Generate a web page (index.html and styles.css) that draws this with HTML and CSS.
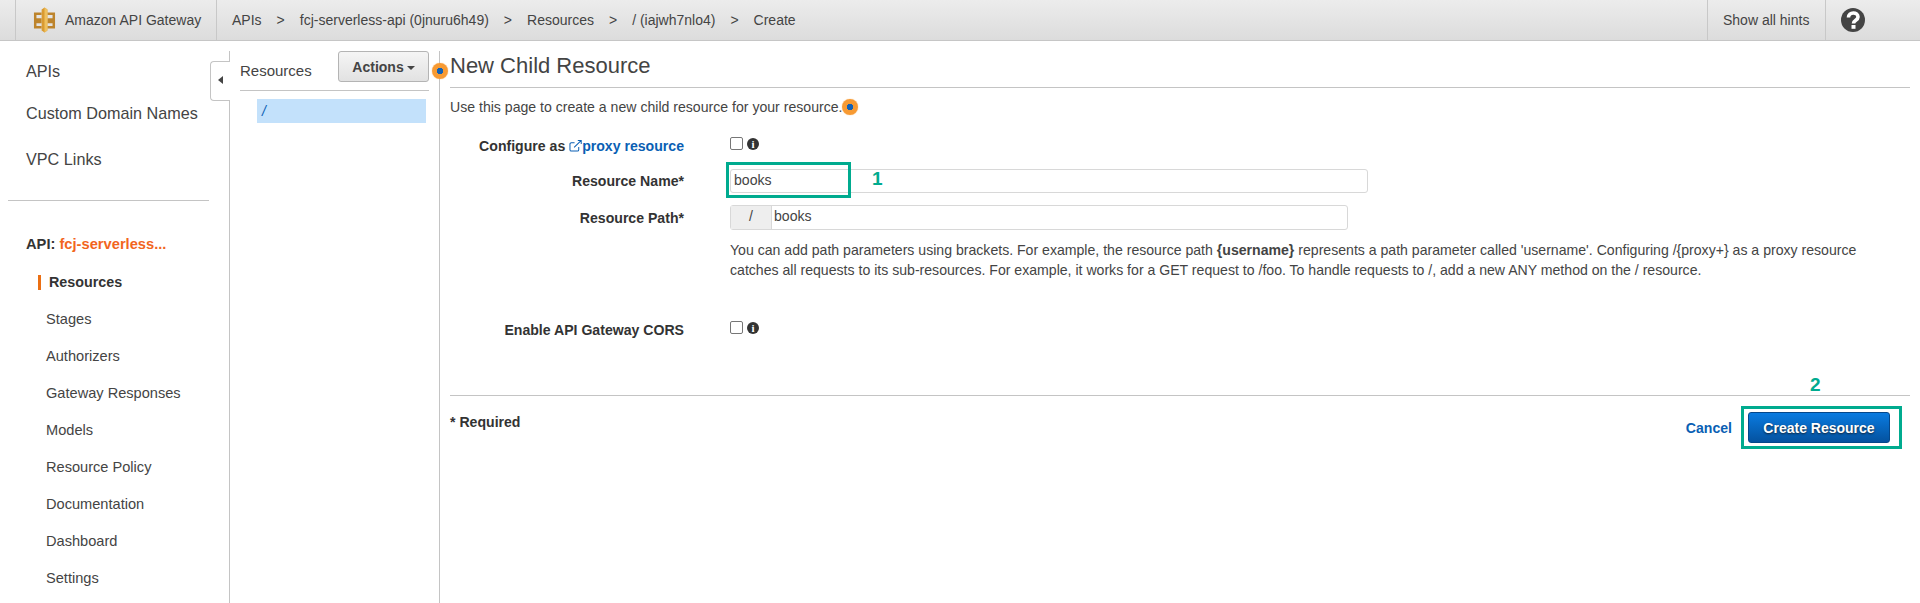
FILE: index.html
```html
<!DOCTYPE html>
<html lang="en">
<head>
    <meta charset="UTF-8">
    <title>Amazon API Gateway</title>
    <link rel="stylesheet" href="styles.css">
</head>
<body>
    <header class="topbar">
        <div class="brand">
            <svg class="brand-logo" viewBox="0 0 24 26" width="23" height="26">
                <path fill="none" stroke="#bd842c" stroke-width="2.600" d="M9 6.500H2.300v6H9M9 15H2.300v5.500H9M15 6.500h6.700v6H15M15 15h6.700v5.500H15"/>
                <path fill="#d99a32" d="M9 2l3-2 3 2v22l-3 2-3-2z"/>
                <path fill="#efc05e" d="M12 0l3 2v22l-3 2z"/>
            </svg>
            <span>Amazon API Gateway</span>
        </div>
        <nav class="crumbs">
            <span>APIs</span><i>&gt;</i>
            <span>fcj-serverless-api (0jnuru6h49)</span><i>&gt;</i>
            <span>Resources</span><i>&gt;</i>
            <span>/ (iajwh7nlo4)</span><i>&gt;</i>
            <span>Create</span>
        </nav>
        <div class="hints">Show all hints</div>
        <div class="help">
            <svg viewBox="0 0 24 24" width="24" height="24">
                <circle cx="12" cy="12" r="12" fill="#444"/>
                <path fill="none" stroke="#fff" stroke-width="3.600" d="M7.500 9.500c0-6 9.500-6 9.500-.5 0 3.500-4.500 3-4.500 6.500"/>
                <rect x="10.500" y="17" width="4" height="3.800" fill="#fff"/>
            </svg>
        </div>
    </header>

    <div class="page">
        <aside class="sidebar">
            <ul class="nav-top">
                <li>APIs</li>
                <li>Custom Domain Names</li>
                <li>VPC Links</li>
            </ul>
            <div class="api-name">API: <span>fcj-serverless...</span></div>
            <ul class="nav-sub">
                <li class="active">Resources</li>
                <li>Stages</li>
                <li>Authorizers</li>
                <li>Gateway Responses</li>
                <li>Models</li>
                <li>Resource Policy</li>
                <li>Documentation</li>
                <li>Dashboard</li>
                <li>Settings</li>
            </ul>
            <div class="collapse"><span></span></div>
        </aside>

        <section class="tree">
            <div class="tree-head">
                <span>Resources</span>
                <button class="actions">Actions<b></b></button>
            </div>
            <div class="tree-item">/</div>
            <div class="hint-dot tree-dot"></div>
        </section>

        <main class="content">
            <h1>New Child Resource</h1>
            <p class="intro">Use this page to create a new child resource for your resource.<span class="hint-dot"></span></p>

            <div class="row row-proxy">
                <label>Configure as
                    <a class="ext-link"><svg viewBox="0 0 14 13" width="13" height="12"><path fill="none" stroke="#0a5fb4" stroke-width="1.100" d="M10.500 7.500v3a1.500 1.500 0 0 1-1.500 1.500H2.500A1.500 1.500 0 0 1 1 10.500V4.500A1.500 1.500 0 0 1 2.500 3H6M5.500 8L13 .8M9.500.6H13.200V4.300"/></svg>proxy resource</a>
                </label>
                <div class="check-cell"><span class="checkbox"></span><span class="info">i</span></div>
            </div>
            <div class="row row-name">
                <label>Resource Name*</label>
                <div class="text-field name-field">books</div>
            </div>
            <div class="row row-path">
                <label>Resource Path*</label>
                <div class="path-field"><span class="path-prefix">/</span><span class="path-value">books</span></div>
            </div>
            <p class="help-text">You can add path parameters using brackets. For example, the resource path <b>{username}</b> represents a path parameter called 'username'. Configuring /{proxy+} as a proxy resource catches all requests to its sub-resources. For example, it works for a GET request to /foo. To handle requests to /, add a new ANY method on the / resource.</p>
            <div class="row row-cors">
                <label>Enable API Gateway CORS</label>
                <div class="check-cell"><span class="checkbox"></span><span class="info">i</span></div>
            </div>

            <div class="form-foot">
                <span class="required">* Required</span>
                <a class="cancel">Cancel</a>
                <button class="create">Create Resource</button>
            </div>

            <!-- tutorial annotations drawn on top of the form -->
            <div class="mark mark-name"></div>
            <div class="mark-num num-1">1</div>
            <div class="mark mark-create"></div>
            <div class="mark-num num-2">2</div>
        </main>
    </div>
</body>
</html>
```

FILE: styles.css
```css
* {
    box-sizing: border-box;
}
html, body {
    margin: 0;
    padding: 0;
    height: 603px;
    overflow: hidden;
}
body {
    font-family: "Liberation Sans", Arial, sans-serif;
    font-size: 14px;
    color: #444;
    background-color: #fff;
}
ul {
    list-style: none;
    margin: 0;
    padding: 0;
}

/* top bar */
.topbar {
    display: flex;
    align-items: stretch;
    height: 41px;
    background: linear-gradient(#ececec, #dcdcdc);
    border-bottom: 1px solid #c6c6c6;
}
.brand {
    display: flex;
    align-items: center;
    gap: 9px;
    width: 202px;
    margin-left: 15px;
    padding-left: 17px;
    border-left: 1px solid #c8c8c8;
    border-right: 1px solid #c8c8c8;
}
.crumbs {
    flex: 1;
    display: flex;
    align-items: center;
    padding-left: 15px;
}
.crumbs i {
    font-style: normal;
    margin: 0 15px;
}
.hints {
    display: flex;
    align-items: center;
    width: 119px;
    padding-left: 15px;
    border-left: 1px solid #c8c8c8;
    border-right: 1px solid #c8c8c8;
}
.help {
    display: flex;
    align-items: center;
    width: 94px;
    padding-left: 15px;
}

/* columns */
.page {
    display: flex;
    height: 562px;
    padding-top: 10px;
}
.sidebar {
    position: relative;
    width: 230px;
    flex-shrink: 0;
    border-right: 1px solid #c4c4c4;
    padding-left: 8px;
}
.nav-top {
    width: 201px;
    padding: 0 0 15px 18px;
    border-bottom: 1px solid #c4c4c4;
    font-size: 16.200px;
}
.nav-top li {
    height: 46px;
    line-height: 20px;
    padding-top: 10px;
}
.nav-top li:first-child {
    height: 42px;
}
.api-name {
    margin: 34px 0 0 18px;
    font-size: 14.700px;
    font-weight: bold;
    line-height: 18px;
    color: #333;
}
.api-name span {
    color: #f2651d;
}
.nav-sub {
    margin: 11px 0 0 38px;
    font-size: 14.600px;
}
.nav-sub li {
    height: 37px;
    line-height: 37px;
}
.nav-sub .active {
    position: relative;
    margin-left: 3px;
    font-weight: bold;
    font-size: 14.300px;
    color: #333;
}
.nav-sub .active::before {
    content: "";
    position: absolute;
    left: -11px;
    top: 11px;
    width: 3px;
    height: 15px;
    background-color: #eb6f13;
}
.collapse {
    position: absolute;
    top: 10px;
    right: -1px;
    width: 20px;
    height: 40px;
    background-color: #fff;
    border: 1px solid #c4c4c4;
    border-right: none;
    border-radius: 4px 0 0 4px;
}
.collapse span {
    position: absolute;
    left: 7px;
    top: 14px;
    border: 4px solid transparent;
    border-left-width: 0;
    border-right: 5px solid #444;
}

.tree {
    position: relative;
    width: 210px;
    flex-shrink: 0;
    border-right: 1px solid #c4c4c4;
}
.tree-head {
    display: flex;
    justify-content: space-between;
    align-items: flex-start;
    width: 189px;
    height: 40px;
    margin-left: 10px;
    border-bottom: 1px solid #c4c4c4;
    font-size: 15px;
}
.tree-head span {
    margin-top: 10px;
    line-height: 20px;
}
.actions {
    width: 91px;
    height: 31px;
    padding: 0;
    font-family: inherit;
    font-size: 14px;
    font-weight: bold;
    color: #444;
    background: linear-gradient(#f5f5f5, #e2e2e2);
    border: 1px solid #b4b4b4;
    border-radius: 3px;
}
.actions b {
    display: inline-block;
    margin-left: 3px;
    vertical-align: middle;
    border: 4px solid transparent;
    border-bottom: none;
    border-top: 4px solid #444;
}
.tree-item {
    width: 169px;
    height: 24px;
    margin: 8px 0 0 27px;
    padding-left: 5px;
    line-height: 24px;
    font-size: 14px;
    font-style: italic;
    color: #0a5fb4;
    background-color: #c3e1fb;
}
.hint-dot {
    display: inline-block;
    flex-shrink: 0;
    width: 16px;
    height: 16px;
    background: radial-gradient(circle, #1261b5 0 3px, #f79a33 3.500px);
    border-radius: 50%;
    box-shadow: 0 0 1px #f79a33;
}
.tree-dot {
    position: absolute;
    right: -9px;
    top: 12px;
}

/* form */
.content {
    position: relative;
    flex: 1;
    padding: 0 10px;
    font-size: 14.100px;
}
.content h1 {
    margin: 0;
    height: 37px;
    border-bottom: 1px solid #c4c4c4;
    font-size: 22px;
    font-weight: normal;
    line-height: 29px;
}
.intro {
    display: flex;
    align-items: center;
    margin: 9px 0 0;
    height: 20px;
}
.row {
    display: flex;
}
.row label {
    width: 234px;
    font-weight: bold;
    color: #333;
    text-align: right;
}
.row-proxy {
    margin-top: 17px;
    height: 24px;
    align-items: center;
}
.ext-link {
    color: #0a5fb4;
}
.ext-link svg {
    vertical-align: -1px;
}
.check-cell {
    display: flex;
    align-items: center;
    gap: 4px;
    margin-left: 46px;
    margin-top: -5px;
}
.checkbox {
    width: 13px;
    height: 13px;
    background-color: #fff;
    border: 1px solid #767676;
    border-radius: 2px;
}
.info {
    width: 12px;
    height: 12px;
    border-radius: 50%;
    background-color: #333;
    color: #fff;
    font-family: "Liberation Serif", serif;
    font-size: 11px;
    font-weight: bold;
    line-height: 12px;
    text-align: center;
}
.row-name {
    margin-top: 10px;
    height: 25px;
    align-items: center;
}
.text-field {
    margin-left: 46px;
    padding-left: 3px;
    height: 24px;
    width: 638px;
    line-height: 20px;
    border: 1px solid #d8d8d8;
    border-radius: 3px;
}
.row-path {
    margin-top: 12px;
    height: 25px;
    align-items: center;
}
.path-field {
    display: flex;
    margin-left: 46px;
    width: 618px;
    height: 25px;
    line-height: 21px;
    border: 1px solid #d8d8d8;
    border-radius: 3px;
}
.path-prefix {
    width: 41px;
    text-align: center;
    background-color: #eee;
    border-right: 1px solid #d8d8d8;
}
.path-value {
    padding-left: 2px;
}
.help-text {
    margin: 10px 0 0 280px;
    width: 1170px;
    line-height: 20px;
}
.row-cors {
    margin-top: 40px;
    height: 20px;
    align-items: center;
}
.form-foot {
    display: flex;
    align-items: flex-start;
    margin-top: 55px;
    border-top: 1px solid #c4c4c4;
    padding: 16px 20px 0 0;
}
.required {
    flex: 1;
    margin-top: 2px;
    font-weight: bold;
    color: #333;
}
.cancel {
    margin-top: 8px;
    font-weight: bold;
    color: #0a5fb4;
}
.create {
    margin: 0 0 0 16px;
    width: 142px;
    height: 31px;
    padding: 0;
    font-family: inherit;
    font-size: 14px;
    font-weight: bold;
    color: #fff;
    text-shadow: 0 1px 2px #123;
    background: linear-gradient(#0a7be0, #04529f);
    border: 1px solid #05478a;
    border-radius: 3px;
}

/* annotations */
.mark {
    position: absolute;
    border: 3px solid #00ab8f;
}
.mark-name {
    left: 286px;
    top: 111px;
    width: 125px;
    height: 36px;
}
.mark-create {
    left: 1301px;
    top: 355px;
    width: 161px;
    height: 43px;
}
.mark-num {
    position: absolute;
    font-size: 19px;
    font-weight: bold;
    line-height: 20px;
    color: #00ab8f;
}
.num-1 {
    left: 432px;
    top: 118px;
}
.num-2 {
    left: 1370px;
    top: 324px;
}
```
